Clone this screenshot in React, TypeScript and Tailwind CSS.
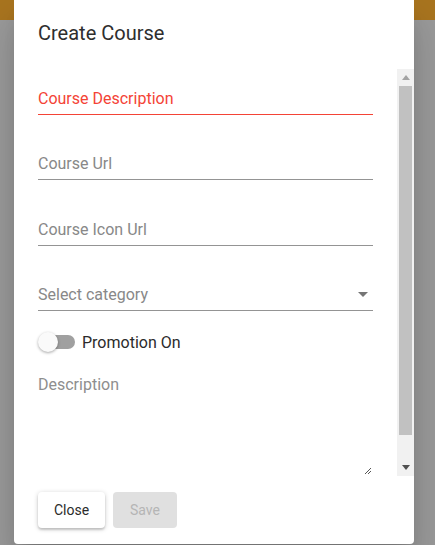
const font = { fontFamily: "Roboto, 'Liberation Sans', sans-serif" };

function TextField({ label, active, className }: { label: string; active?: boolean; className: string }) {
  return (
    <div className={`flex flex-col justify-end ${className}`}>
      <div
        className={`border-b pb-[6px] text-[16px] leading-[19px] ${
          active ? 'border-[#f44336] text-[#f44336]' : 'border-[#949494] text-[#888888]'
        }`}
      >
        {label}
      </div>
    </div>
  );
}

function Scrollbar() {
  return (
    <div className="w-[17px] bg-[#f1f1f1] flex flex-col items-center">
      <div className="h-[17px] w-full flex items-center justify-center">
        <svg width="8" height="5" viewBox="0 0 8 5">
          <path d="M0 5 L4 0 L8 5 Z" fill="#a3a3a3" />
        </svg>
      </div>
      <div className="h-[349px] w-[13px] bg-[#c1c1c1]" />
      <div className="flex-1 w-full flex items-end justify-center pb-[6px]">
        <svg width="8" height="5" viewBox="0 0 8 5">
          <path d="M0 0 L8 0 L4 5 Z" fill="#505050" />
        </svg>
      </div>
    </div>
  );
}

export default function App() {
  return (
    <div className="w-[435px] h-[545px] bg-[#999999] relative overflow-hidden" style={font}>
      {/* page behind backdrop */}
      <div className="h-[20px] bg-[#a8741f]" />

      {/* Dialog */}
      <div className="absolute left-[14px] top-0 w-[400px] h-[544px] bg-white rounded-b-[4px] shadow-[0_11px_15px_-7px_rgba(0,0,0,0.2),0_24px_38px_3px_rgba(0,0,0,0.14)] flex flex-col">
        <h2 className="px-6 pt-[17px] h-[49px] text-[20px] leading-[32px] text-[#2e2e2e] font-normal">
          Create Course
        </h2>

        <div className="mt-[20px] h-[407px] flex">
          <div className="flex-1 px-6 overflow-hidden flex flex-col">
            <TextField label="Course Description" active className="h-[46px]" />
            <TextField label="Course Url" className="h-[65px]" />
            <TextField label="Course Icon Url" className="h-[66px]" />

            {/* Select */}
            <div className="h-[65px] flex flex-col justify-end">
              <div className="border-b border-[#949494] pb-[6px] flex items-center justify-between pr-[5px]">
                <span className="text-[16px] leading-[19px] text-[#888888]">Select category</span>
                <svg width="10" height="5" viewBox="0 0 10 5">
                  <path d="M0 0 L10 0 L5 5 Z" fill="#757575" />
                </svg>
              </div>
            </div>

            {/* Switch */}
            <div className="mt-[12px] h-[38px] flex items-center">
              <div className="relative w-[37px] h-[20px] flex items-center">
                <div className="ml-[3px] w-[34px] h-[14px] rounded-full bg-[#a0a0a0]" />
                <div className="absolute left-0 top-0 w-[20px] h-[20px] rounded-full bg-[#fafafa] shadow-[0_1px_3px_rgba(0,0,0,0.35)]" />
              </div>
              <span className="ml-[7px] text-[16px] leading-[19px] text-[#2b2b2b]">Promotion On</span>
            </div>

            {/* Textarea */}
            <div className="mt-[14px] flex-1 flex flex-col">
              <span className="text-[16px] leading-[19px] text-[#8e8e8e]">Description</span>
              <div className="flex-1 flex items-end justify-end">
                <svg width="8" height="8" viewBox="0 0 8 8" className="mb-[1px] mr-[1px]">
                  <path d="M1 7 L7 1 M4 7 L7 4" stroke="#555" strokeWidth="1" />
                </svg>
              </div>
            </div>
          </div>
          <Scrollbar />
        </div>

        {/* Actions */}
        <div className="px-6 pt-[16px] flex gap-2">
          <button className="h-[36px] w-[67px] rounded-[4px] bg-white text-[14px] text-[#2b2b2b] shadow-[0_1px_5px_rgba(0,0,0,0.2),0_2px_2px_rgba(0,0,0,0.14)]">
            Close
          </button>
          <button className="h-[36px] w-[64px] rounded-[4px] bg-[#e0e0e0] text-[14px] text-[#b5b5b5]">
            Save
          </button>
        </div>
      </div>
    </div>
  );
}
